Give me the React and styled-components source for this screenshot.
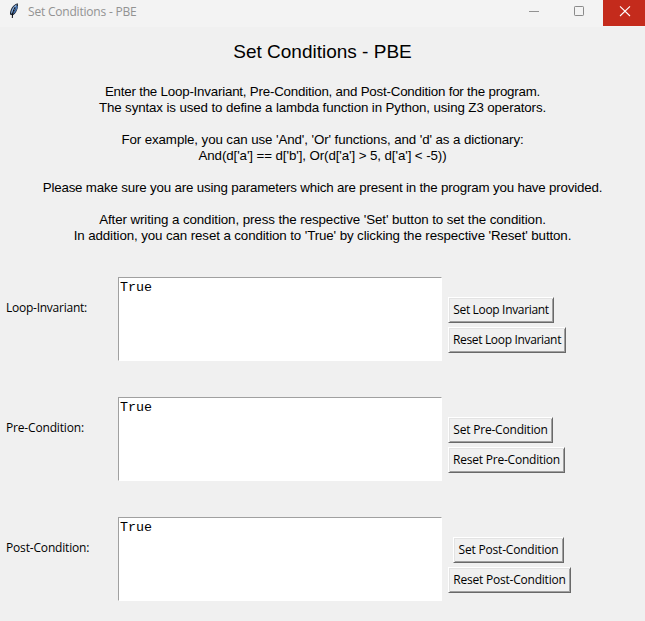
import React from "react";
import styled, { createGlobalStyle } from "styled-components";

const Global = createGlobalStyle`
  * { box-sizing: border-box; }
  html, body { margin: 0; background: #f0f0f0; overflow: hidden; }
`;

const Window = styled.main`
  width: 645px;
  height: 621px;
  background: #f0f0f0;
  color: #000;
  overflow: hidden;
  font-family: "Open Sans", "Noto Sans", sans-serif;
`;

const TitleBar = styled.header`
  display: flex;
  height: 27px;
  background: #f3f3f3;
  padding-left: 8px;
`;

const Feather = styled.svg`
  width: 12px;
  height: 18px;
  margin-top: 2px;
  flex: none;
`;

const Caption = styled.span`
  flex: 1;
  margin-left: 8px;
  font-size: 12px;
  line-height: 23px;
  letter-spacing: -0.2px;
  color: #929292;
  white-space: nowrap;
`;

const Control = styled.button`
  width: ${(p) => p.$width}px;
  height: 26px;
  padding: 0;
  border: 0;
  background: ${(p) => (p.$close ? "#c42b1c" : "transparent")};
  svg { display: block; width: 100%; height: 100%; }
`;

const Heading = styled.h1`
  margin: 13px 0 0;
  height: 24px;
  font: 400 19px/24px "Liberation Sans", Arial, sans-serif;
  text-align: center;
`;

const Intro = styled.section`
  margin-top: 20px;
  height: 160px;
  font: 13.33px/16px "Liberation Sans", Arial, sans-serif;
  text-align: center;
`;

const Line = styled.p`
  margin: 0;
  height: 16px;
  letter-spacing: ${(p) => p.$spacing}px;
  white-space: pre;
`;

const Conditions = styled.section`
  display: grid;
  grid-auto-rows: 84px;
  row-gap: 36px;
  margin-top: 33px;
  padding-left: 6px;
`;

const Row = styled.div`
  display: grid;
  grid-template-columns: 112px 324px 1fr;
`;

const Label = styled.label`
  padding-top: 22px;
  font-size: 12px;
  line-height: 17px;
  letter-spacing: ${(p) => p.$spacing}px;
`;

const Editor = styled.textarea`
  width: 324px;
  height: 84px;
  margin: 0;
  padding: 2px 1px;
  resize: none;
  outline: none;
  border: 1px solid #fff;
  border-top-color: #a0a0a0;
  border-left-color: #a0a0a0;
  border-radius: 0;
  background: #fff;
  color: #000;
  font: 13.33px/16px "Liberation Mono", "Courier New", monospace;
`;

const Actions = styled.div`
  display: flex;
  flex-direction: column;
  align-items: flex-start;
  gap: 4px;
  padding: 20px 0 0 6px;
`;

const Action = styled.button`
  width: ${(p) => p.$width}px;
  height: 26px;
  margin-left: ${(p) => p.$indent || 0}px;
  padding: 0;
  border: 1px solid;
  border-color: #fff #696969 #696969 #fff;
  box-shadow: inset 1px 1px #e3e3e3, inset -1px -1px #a0a0a0;
  background: #f0f0f0;
  color: #000;
  font: 12px/22px "Open Sans", "Noto Sans", sans-serif;
  letter-spacing: ${(p) => p.$spacing}px;
  white-space: nowrap;
`;

const intro = [
  ["Enter the Loop-Invariant, Pre-Condition, and Post-Condition for the program.", -0.21],
  ["The syntax is used to define a lambda function in Python, using Z3 operators.", -0.12],
  ["", 0],
  ["For example, you can use 'And', 'Or' functions, and 'd' as a dictionary:", -0.1],
  ["And(d['a'] == d['b'], Or(d['a'] > 5, d['a'] < -5))", -0.1],
  ["", 0],
  ["Please make sure you are using parameters which are present in the program you have provided.", -0.18],
  ["", 0],
  ["After writing a condition, press the respective 'Set' button to set the condition.", -0.09],
  ["In addition, you can reset a condition to 'True' by clicking the respective 'Reset' button.", -0.11],
];

const conditions = [
  { label: "Loop-Invariant:", spacing: -0.25, set: ["Set Loop Invariant", 106, -0.33, 0], reset: ["Reset Loop Invariant", 118, -0.33] },
  { label: "Pre-Condition:", spacing: -0.17, set: ["Set Pre-Condition", 105, -0.2, 0], reset: ["Reset Pre-Condition", 117, -0.22] },
  { label: "Post-Condition:", spacing: -0.17, set: ["Set Post-Condition", 111, -0.2, 5], reset: ["Reset Post-Condition", 123, -0.22] },
];

export default function App() {
  return (
    <Window>
      <Global />
      <TitleBar>
        <Feather viewBox="0 0 12 18">
          <path d="M2 12.6C1.6 8.5 4.2 3 9.7 1.2C10.8 5.5 8.5 11 4.6 13.4Z" fill="#18202c" />
          <path d="M3.1 11.3C3.1 8 5.2 4.2 8.9 2.3C8.4 5.5 6.4 8.6 3.9 11.8Z" fill="#86aee0" />
          <path d="M5.2 11.4C7.4 9.4 8.8 7 9.1 4" fill="none" stroke="#4775b5" strokeWidth="1.4" />
          <path d="M7.2 5C5.4 8 4.3 11 4.3 16" fill="none" stroke="#0b0d12" strokeWidth="1" />
        </Feather>
        <Caption>Set Conditions - PBE</Caption>
        <Control $width={46} aria-label="Minimize">
          <svg viewBox="0 0 46 26"><path d="M18 11.5H28" stroke="#929292" /></svg>
        </Control>
        <Control $width={46} aria-label="Maximize">
          <svg viewBox="0 0 46 26"><rect x="17.5" y="6.5" width="9" height="9" rx="0.7" fill="none" stroke="#8a8a8a" /></svg>
        </Control>
        <Control $width={42} $close aria-label="Close">
          <svg viewBox="0 0 42 26"><path d="M17 6.3L27 16M27 6.3L17 16" stroke="#fff" strokeWidth="1.1" /></svg>
        </Control>
      </TitleBar>
      <Heading>Set Conditions - PBE</Heading>
      <Intro>
        {intro.map(([text, spacing], i) => (
          <Line key={i} $spacing={spacing}>{text}</Line>
        ))}
      </Intro>
      <Conditions>
        {conditions.map(({ label, spacing, set, reset }) => (
          <Row key={label}>
            <Label $spacing={spacing}>{label}</Label>
            <Editor defaultValue="True" spellCheck={false} aria-label={label} />
            <Actions>
              <Action $width={set[1]} $spacing={set[2]} $indent={set[3]}>{set[0]}</Action>
              <Action $width={reset[1]} $spacing={reset[2]}>{reset[0]}</Action>
            </Actions>
          </Row>
        ))}
      </Conditions>
    </Window>
  );
}
